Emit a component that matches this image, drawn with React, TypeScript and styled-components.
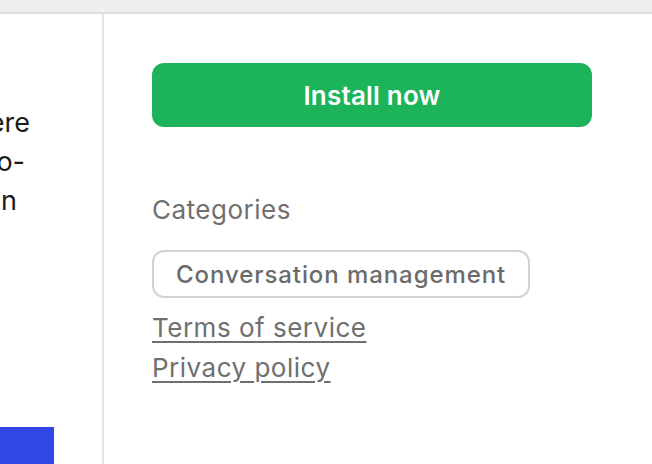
import React from "react";
import styled, { createGlobalStyle } from "styled-components";

const Global = createGlobalStyle`
  html, body { margin: 0; padding: 0; background: #ffffff; }
  body { font-family: Inter, "Noto Sans", sans-serif; overflow: hidden; }
  * { box-sizing: border-box; }
`;

const Page = styled.div`
  width: 652px;
  height: 464px;
  display: flex;
  flex-direction: column;
  overflow: hidden;
`;

const TopBar = styled.div`
  height: 14px;
  flex: none;
  background: #efefef;
  border-bottom: 2px solid #dedede;
`;

const Body = styled.div`
  flex: 1;
  display: flex;
  min-height: 0;
`;

const MainColumn = styled.div`
  width: 104px;
  flex: none;
  border-right: 2px solid #e4e4e4;
  overflow: hidden;
  display: flex;
  flex-direction: column;
  align-items: flex-end;
  padding-top: 89px;
`;

const Paragraph = styled.div`
  display: flex;
  flex-direction: column;
  align-items: flex-end;
  font-size: 27px;
  line-height: 39px;
  color: #1c1c1c;
  font-weight: 400;
`;

const Line = styled.span<{ $inset: number }>`
  white-space: nowrap;
  flex: none;
  margin-right: ${(p) => p.$inset}px;
`;

const PrimaryAction = styled.div`
  flex: none;
  width: 260px;
  height: 60px;
  margin-top: 207px;
  margin-right: 48px;
  background: #3046e7;
  border-radius: 8px 0 0 0;
`;

const Sidebar = styled.aside`
  flex: 1;
  padding: 49px 60px 0 48px;
  display: flex;
  flex-direction: column;
  align-items: flex-start;
`;

const InstallButton = styled.button`
  width: 440px;
  height: 64px;
  border: none;
  border-radius: 12px;
  background: #1db35a;
  color: #ffffff;
  font-family: Inter, "Noto Sans", sans-serif;
  font-size: 26px;
  font-weight: 600;
  letter-spacing: 0.2px;
  cursor: pointer;
`;

const SectionTitle = styled.div`
  margin-top: 63px;
  font-size: 26px;
  line-height: 40px;
  color: #707070;
  font-weight: 400;
  letter-spacing: 0.5px;
`;

const TagList = styled.div`
  margin-top: 20px;
  display: flex;
  gap: 8px;
`;

const Tag = styled.span`
  height: 48px;
  display: inline-flex;
  align-items: center;
  padding: 0 22px;
  border: 2px solid #d2d2d2;
  border-radius: 12px;
  font-size: 24px;
  font-weight: 500;
  color: #6b6b6b;
  letter-spacing: 0.92px;
`;

const Links = styled.div`
  margin-top: 10px;
  display: flex;
  flex-direction: column;
`;

const FooterLink = styled.a`
  font-size: 26px;
  line-height: 40px;
  color: #6f6f6f;
  text-decoration: underline;
  text-decoration-thickness: 2px;
  text-underline-offset: 4px;
  letter-spacing: 0.5px;
`;

export default function App() {
  return (
    <Page>
      <Global />
      <TopBar />
      <Body>
        <MainColumn>
          <Paragraph>
            <Line $inset={72}>sidebar where</Line>
            <Line $inset={77}>auto-</Line>
            <Line $inset={85}>than</Line>
          </Paragraph>
          <PrimaryAction />
        </MainColumn>
        <Sidebar>
          <InstallButton>Install now</InstallButton>
          <SectionTitle>Categories</SectionTitle>
          <TagList>
            <Tag>Conversation management</Tag>
          </TagList>
          <Links>
            <FooterLink href="#">Terms of service</FooterLink>
            <FooterLink href="#">Privacy policy</FooterLink>
          </Links>
        </Sidebar>
      </Body>
    </Page>
  );
}
